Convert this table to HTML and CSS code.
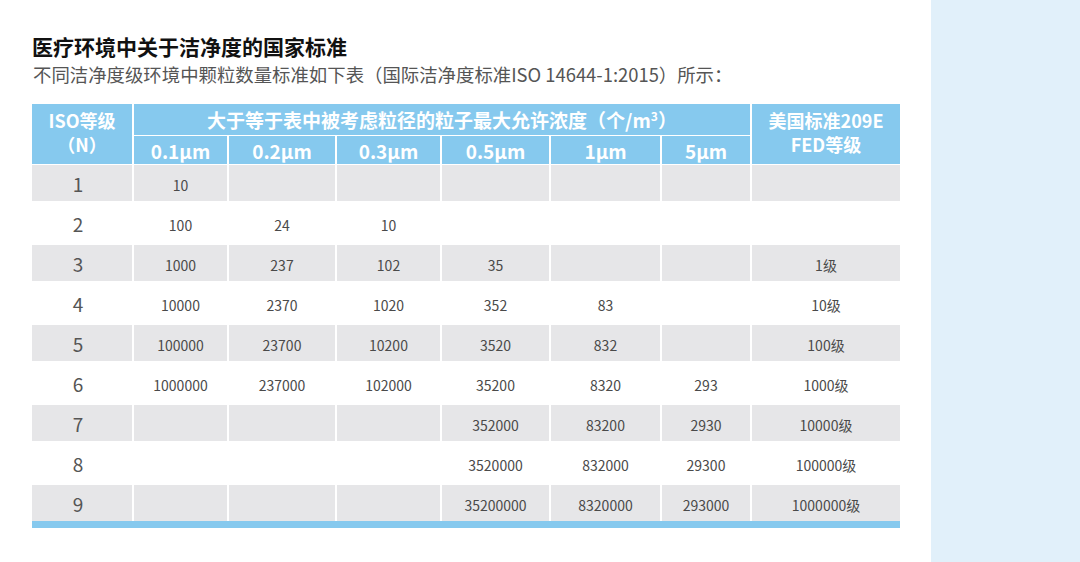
FILE: index.html
```html
<!DOCTYPE html>
<html lang="zh-CN">
<head>
<meta charset="utf-8">
<link rel="stylesheet" href="styles.css">
</head>
<body>
<div class="page">
  <main class="main">
    <h1 class="title">医疗环境中关于洁净度的国家标准</h1>
    <p class="subtitle">不同洁净度级环境中颗粒数量标准如下表（国际洁净度标准ISO 14644-1:2015）所示：</p>
    <div class="table">
      <div class="thead">
        <div class="th th-iso"><span>ISO等级<br>（N）</span></div>
        <div class="th th-group"><span>大于等于表中被考虑粒径的粒子最大允许浓度（个/m<sup>3</sup>）</span></div>
        <div class="th th-fed"><span>美国标准209E<br>FED等级</span></div>
        <div class="th"><span>0.1μm</span></div>
        <div class="th"><span>0.2μm</span></div>
        <div class="th"><span>0.3μm</span></div>
        <div class="th"><span>0.5μm</span></div>
        <div class="th"><span>1μm</span></div>
        <div class="th"><span>5μm</span></div>
      </div>
      <div class="tbody">
        <div class="tr alt"><div class="td n">1</div><div class="td">10</div><div class="td"></div><div class="td"></div><div class="td"></div><div class="td"></div><div class="td"></div><div class="td"></div></div>
        <div class="tr"><div class="td n">2</div><div class="td">100</div><div class="td">24</div><div class="td">10</div><div class="td"></div><div class="td"></div><div class="td"></div><div class="td"></div></div>
        <div class="tr alt"><div class="td n">3</div><div class="td">1000</div><div class="td">237</div><div class="td">102</div><div class="td">35</div><div class="td"></div><div class="td"></div><div class="td">1级</div></div>
        <div class="tr"><div class="td n">4</div><div class="td">10000</div><div class="td">2370</div><div class="td">1020</div><div class="td">352</div><div class="td">83</div><div class="td"></div><div class="td">10级</div></div>
        <div class="tr alt"><div class="td n">5</div><div class="td">100000</div><div class="td">23700</div><div class="td">10200</div><div class="td">3520</div><div class="td">832</div><div class="td"></div><div class="td">100级</div></div>
        <div class="tr"><div class="td n">6</div><div class="td">1000000</div><div class="td">237000</div><div class="td">102000</div><div class="td">35200</div><div class="td">8320</div><div class="td">293</div><div class="td">1000级</div></div>
        <div class="tr alt"><div class="td n">7</div><div class="td"></div><div class="td"></div><div class="td"></div><div class="td">352000</div><div class="td">83200</div><div class="td">2930</div><div class="td">10000级</div></div>
        <div class="tr"><div class="td n">8</div><div class="td"></div><div class="td"></div><div class="td"></div><div class="td">3520000</div><div class="td">832000</div><div class="td">29300</div><div class="td">100000级</div></div>
        <div class="tr alt"><div class="td n">9</div><div class="td"></div><div class="td"></div><div class="td"></div><div class="td">35200000</div><div class="td">8320000</div><div class="td">293000</div><div class="td">1000000级</div></div>
      </div>
      <div class="tfoot"></div>
    </div>
  </main>
  <aside class="aside"></aside>
</div>
</body>
</html>
```

FILE: styles.css
```css
* { box-sizing: border-box; }
html, body { margin: 0; padding: 0; }
body {
  background: #ffffff;
  font-family: "Noto Sans CJK SC", "Noto Sans", sans-serif;
  color: #444;
}
.page {
  display: flex;
  width: 1080px;
  height: 562px;
}
.main {
  width: 931px;
  padding: 33px 0 0 32px;
}
.aside {
  flex: 1;
  background: #e1f0fa;
}
.title {
  margin: 0;
  font-size: 21px;
  line-height: 26px;
  font-weight: 700;
  color: #111;
}
.subtitle {
  margin: 2px 0 0 1px;
  font-size: 18.4px;
  line-height: 26px;
  color: #555;
}
.table {
  margin-top: 17px;
  width: 868px;
}
.thead, .tr {
  display: grid;
  grid-template-columns: 100px 93px 106px 103px 107px 109px 88px 148px;
  column-gap: 2px;
}
.thead {
  grid-template-rows: 31px 28px;
  row-gap: 1px;
}
.th {
  background: #86c9ee;
  color: #fff;
  font-weight: 700;
  font-size: 19px;
  line-height: 23px;
  display: flex;
  align-items: center;
  justify-content: center;
  text-align: center;
}
.th sup {
  font-size: 12px;
  line-height: 0;
  vertical-align: 7px;
}
.th-iso {
  grid-row: 1 / span 2;
  grid-column: 1;
  font-size: 18px;
  line-height: 24px;
  padding-bottom: 4px;
}
.th-group {
  grid-row: 1;
  grid-column: 2 / span 6;
}
.th-fed {
  grid-row: 1 / span 2;
  grid-column: 8;
  font-size: 18px;
  line-height: 24px;
  padding-bottom: 4px;
}
.tbody {
  margin-top: 1px;
  display: flex;
  flex-direction: column;
  gap: 4px;
}
.tr { height: 36px; }
.td {
  display: flex;
  align-items: center;
  justify-content: center;
  font-size: 14px;
  color: #4a4a4a;
  padding-top: 3px;
}
.tr.alt .td { background: #e6e6e8; }
.td.n {
  font-size: 19px;
  color: #555;
  padding: 0 8px 0 0;
  font-weight: 400;
}
.tfoot {
  height: 7px;
  background: #86c9ee;
}
```
